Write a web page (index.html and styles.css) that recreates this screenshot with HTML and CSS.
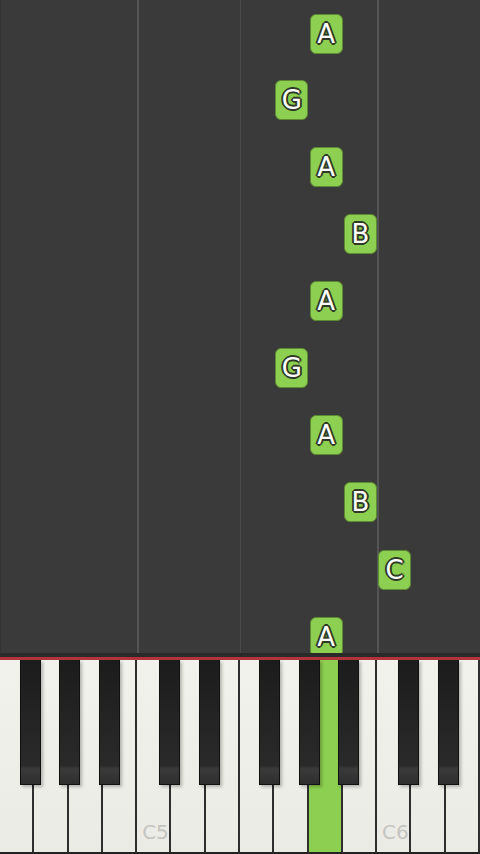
FILE: index.html
```html
<!DOCTYPE html>
<html lang="en">
<head>
    <meta charset="UTF-8">
    <meta name="viewport" content="width=device-width, initial-scale=1.0">
    <title>Piano Roll</title>
    <link rel="stylesheet" href="styles.css">
</head>
<body>

    <div class="app">
        <div class="roll" id="roll">
            <div class="lane"></div>
            <div class="lane lane-bright"></div>
            <div class="lane lane-faint"></div>
            <div class="lane lane-bright"></div>
        </div>

        <div class="kbd-edge"></div>

        <div class="keyboard" id="keyboard">
            <div class="white"></div>
            <div class="white"></div>
            <div class="white"></div>
            <div class="white"></div>
            <div class="white"><span class="label">C5</span></div>
            <div class="white"></div>
            <div class="white"></div>
            <div class="white"></div>
            <div class="white"></div>
            <div class="white pressed"></div>
            <div class="white"></div>
            <div class="white"><span class="label">C6</span></div>
            <div class="white"></div>
            <div class="white"></div>
        </div>
    </div>

    <script>
        // Falling notes: column = white key index, top in px
        const notes = [
            { name: 'A', col: 9, top: 14 },
            { name: 'G', col: 8, top: 80 },
            { name: 'A', col: 9, top: 147 },
            { name: 'B', col: 10, top: 214 },
            { name: 'A', col: 9, top: 281 },
            { name: 'G', col: 8, top: 348 },
            { name: 'A', col: 9, top: 415 },
            { name: 'B', col: 10, top: 482 },
            { name: 'C', col: 11, top: 550 },
            { name: 'A', col: 9, top: 617 }
        ];

        // Black key left edges (F#4 .. D#6)
        const blackKeys = [20, 59, 99, 159, 199, 259, 299, 338, 398, 438];
        const keyWidth = 480 / 14;

        const roll = document.getElementById('roll');
        notes.forEach(n => {
            const el = document.createElement('div');
            el.className = 'note';
            el.textContent = n.name;
            el.style.left = (n.col * keyWidth + 1) + 'px';
            el.style.top = n.top + 'px';
            roll.appendChild(el);
        });

        const keyboard = document.getElementById('keyboard');
        blackKeys.forEach(x => {
            const el = document.createElement('div');
            el.className = 'black';
            el.style.left = x + 'px';
            keyboard.appendChild(el);
        });
    </script>

</body>
</html>
```

FILE: styles.css
```css
body {
    margin: 0;
    padding: 0;
    background-color: #393939;
    font-family: 'DejaVu Sans', sans-serif;
}

.app {
    width: 480px;
    height: 854px;
    display: flex;
    flex-direction: column;
    overflow: hidden;
}

.roll {
    position: relative;
    flex: 1;
    display: grid;
    grid-template-columns: 4fr 3fr 4fr 3fr;
    background-color: #3a3a3a;
    overflow: hidden;
}

.lane {
    border-left: 1px solid #333;
}

.lane-bright {
    border-left: 2px solid #555;
}

.lane-faint {
    border-left: 1px solid #4a4a4a;
}

.note {
    position: absolute;
    width: 31px;
    height: 38px;
    background-color: #8dcf50;
    border: 1px solid #5d8a33;
    border-radius: 6px;
    display: flex;
    align-items: center;
    justify-content: center;
    font-size: 26px;
    color: #fff;
    text-shadow: -1px -1px 0 #2f3a26, 1px -1px 0 #2f3a26, -1px 1px 0 #2f3a26, 1px 1px 0 #2f3a26, 0 2px 0 #2f3a26, 2px 0 0 #2f3a26, -2px 0 0 #2f3a26, 0 -2px 0 #2f3a26;
}

.kbd-edge {
    height: 4px;
    background-color: #2a2a2a;
    border-bottom: 3px solid #b3343a;
}

.keyboard {
    position: relative;
    height: 194px;
    display: flex;
    background-color: #222;
}

.white {
    position: relative;
    flex: 1;
    background: linear-gradient(to bottom, #f2f2ec, #ebebe5);
    border-right: 2px solid #2e2e2e;
    border-bottom: 2px solid #222;
}

.white:last-child {
    border-right: none;
}

.white.pressed {
    background: #8dcf50;
}

.label {
    position: absolute;
    left: 5px;
    bottom: 8px;
    font-size: 20px;
    color: #c4c4c0;
}

.black {
    position: absolute;
    top: 0;
    width: 21px;
    height: 125px;
    background: linear-gradient(to bottom, #1c1c1c, #2a2a2a 85%, #3a3a3a 88%, #2e2e2e);
    border: 1px solid #111;
    border-top: none;
    box-sizing: border-box;
    box-shadow: 2px 2px 3px rgba(0, 0, 0, 0.25);
}
```
